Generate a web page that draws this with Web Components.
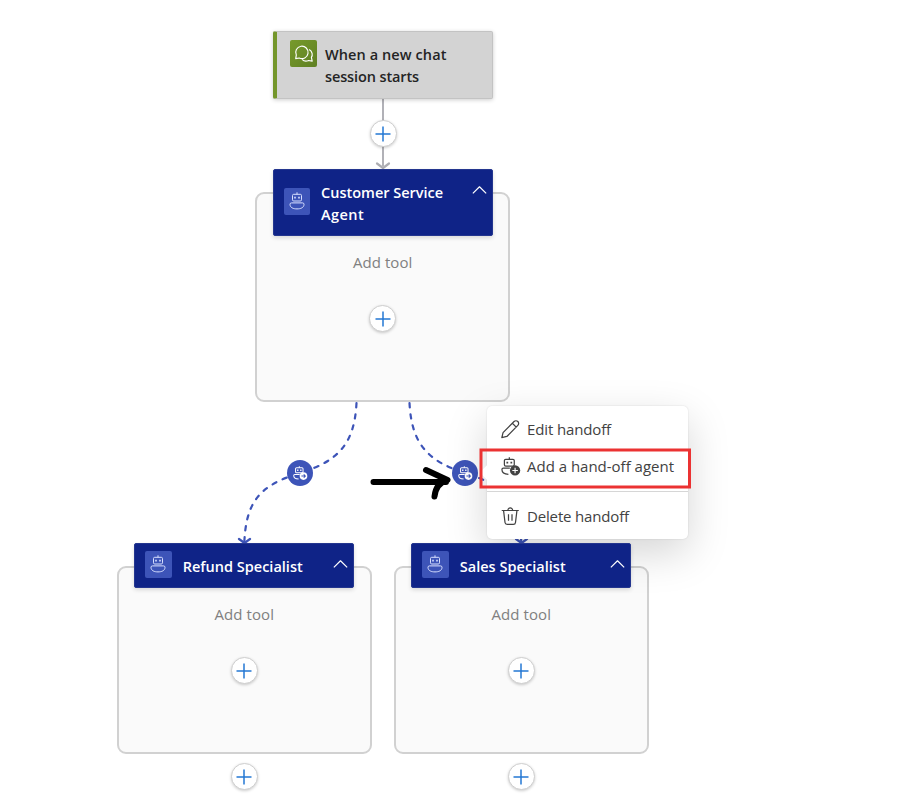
<!DOCTYPE html>
<html lang="en">
<head>
<meta charset="utf-8">
<title>Agent workflow</title>
<style>
html,body{margin:0;background:#fff}
body{width:918px;height:810px;overflow:hidden;font-family:"Open Sans","Noto Sans",sans-serif}
</style>
</head>
<body>
<workflow-canvas></workflow-canvas>
<script>
const define = (name, html, setup) => customElements.define(name, class extends HTMLElement {
  connectedCallback() {
    if (this.shadowRoot) return;
    const t = document.createElement('template');
    t.innerHTML = typeof html === 'function' ? html(this) : html;
    this.attachShadow({mode: 'open'}).append(t.content.cloneNode(true));
    if (setup) setup(this);
  }
});

// Single line of text whose tracking is adjusted to the width attribute.
define('text-run', `<style>:host{display:block;white-space:pre;line-height:22px}span{display:inline-block}</style><span><slot></slot></span>`, el => {
  const s = el.shadowRoot.querySelector('span');
  const n = el.textContent.length;
  const d = (+el.getAttribute('width') - s.getBoundingClientRect().width) / n;
  s.style.letterSpacing = d.toFixed(3) + 'px';
});

const robot = `<rect x="4.500" y="2.300" width="9" height="6.700" rx="1.200"/><path d="M9 .3v2M3.500 10.900h11q1.500 0 1.500 1.400c0 3.500-3.500 4.600-7 4.600s-7-1.100-7-4.600q0-1.400 1.500-1.400z"/><path d="M6.200 5.600h1.600M10.200 5.600h1.600" stroke-width="1.700"/>`;
const badgeRobot = `<rect x="3.300" y="2.200" width="9.600" height="6.600" rx="1.300"/><path d="M8.100 .2v2M8.600 10.800H2.300q-1.400 0-1.400 1.400c0 2.900 2.200 4.500 6.300 4.600"/><path d="M5.300 5.500h1.700M9.200 5.500h1.700" stroke-width="1.800"/>`;
const icons = {
  robot,
  handoff: badgeRobot + `<circle cx="13.500" cy="13" r="4.900" fill="#fff" stroke="none"/><path d="M10.800 13h5M13.800 10.900l2.100 2.100-2.100 2.100" stroke="#3d54b8"/>`,
  addagent: badgeRobot + `<circle cx="13.700" cy="13.100" r="5" fill="#424242" stroke="none"/><path d="M11 13.100h5.400M13.700 10.400v5.400" stroke="#fff" stroke-width="1.100"/>`,
  chat: `<path d="M.7 13.600l.6-3.500a6.200 6.200 0 1 1 2.900 2.900z"/><path d="M14.200 4.600c3.300 2 3.700 5.400 2.200 7.800l.8 3.700-3.600-.6c-2.400 1.100-4.900.6-6.500-1.200"/>`,
  pencil: `<path d="M.8 17.200l1.200-4.900L12.700 1.500a2.450 2.450 0 0 1 3.700 3.700L5.700 16zM11.100 3.200l3.700 3.700"/>`,
  trash: `<path d="M.7 3.400h16.600M6.700 3.200a2.300 2.300 0 0 1 4.600 0M2.500 3.500l1.400 11.600q.2 1.900 2.100 1.900h6q1.900 0 2.100-1.900l1.400-11.600M7.300 7v6.300M10.700 7v6.300"/>`,
  chevron: `<path d="M1 12.500L9 4.500l8 8"/>`,
  plus: `<path d="M1.500 9h15M9 1.500v15"/>`
};
define('ui-icon', el => `<style>:host{display:block;flex:none}svg{display:block;width:100%;height:100%;overflow:visible}</style><svg viewBox="0 0 18 18" fill="none" stroke="currentColor" stroke-width="${el.getAttribute('weight') || 1.1}" stroke-linejoin="round">${icons[el.getAttribute('name')]}</svg>`);

define('add-button', `<style>:host{display:grid;place-items:center;width:27px;height:27px;box-sizing:border-box;border:1px solid #cfcfcf;border-radius:50%;background:#fff;color:#2478d4;box-shadow:0 1px 3px #0003}ui-icon{width:18px;height:18px}</style><ui-icon name="plus" weight="1.5"></ui-icon>`);

define('trigger-card', `<style>
:host{display:flex;box-sizing:border-box;width:220px;height:68.400px;border:1px solid #c3c3c3;border-left:4px solid #74962b;border-radius:2px;background:#d3d3d3;box-shadow:0 1px 4px #0003;padding:8px 0 0 13px;gap:8px;color:#242424;font-size:14.500px;font-weight:600}
.tile{display:grid;place-items:center;width:27px;height:27px;border-radius:2px;background:linear-gradient(135deg,#779a2b,#5f8023);color:#fff}
ui-icon{width:18px;height:18px}.copy{padding-top:4px}
</style><div class="tile"><ui-icon name="chat" weight="1.15"></ui-icon></div><div class="copy"><slot></slot></div>`);

define('agent-group', `<style>
:host{display:grid;width:254.500px;height:var(--h);grid-template-rows:var(--head) 1fr}
.frame{grid-area:1/1/3/2;margin-top:22.500px;border:2px solid #d1d1d1;border-radius:9px;background:#fafafa}
.head{grid-area:1/1;z-index:1;margin:0 17.200px;display:flex;align-items:flex-start;box-sizing:border-box;border:1px solid #24368f;border-radius:2px;background:#0f2387;color:#fff;font-size:14.500px;font-weight:600;padding:var(--pad) 5px 0 10px;box-shadow:0 2px 4px #0002}
.tile{display:grid;place-items:center;width:26.500px;height:27px;box-sizing:border-box;border-radius:2px;background:#3d54b8;color:#d9e0ff}
.tile ui-icon{width:18px;height:18px;margin-top:-2px}
.copy{margin-left:11px;margin-top:var(--shift);flex:1}
.chev{width:15px;height:15px;margin-top:var(--chev)}
.body{grid-area:2/1;z-index:1;display:flex;flex-direction:column;align-items:center;padding-top:15px;gap:32.500px;color:#808080;font-size:15px}
</style><div class="frame"></div><div class="head"><div class="tile"><ui-icon name="robot" weight="1"></ui-icon></div><div class="copy"><slot></slot></div><ui-icon class="chev" name="chevron" weight="1.400"></ui-icon></div><div class="body"><text-run width="59.500">Add tool</text-run><add-button></add-button></div>`);

define('handoff-badge', `<style>:host{display:grid;place-items:center;width:26px;height:26px;border-radius:50%;background:#3d54b8;color:#fff}ui-icon{width:14px;height:14px}</style><ui-icon name="handoff" weight="1.300"></ui-icon>`);

define('menu-item', el => `<style>:host{display:flex;align-items:center;height:36px;gap:8px;padding-left:13.500px;color:#424242;font-size:15px}ui-icon{width:18.500px;height:18.500px}</style><ui-icon name="${el.getAttribute('icon')}" weight="1.200"></ui-icon><slot></slot>`);

define('handoff-menu', `<style>
:host{display:block;box-sizing:border-box;width:201px;height:133px;padding-top:5px;border-radius:5px;background:#fff;box-shadow:0 0 2px #0002,0 14px 42px #0000002b}
:host::before{content:"";position:absolute;left:-5px;top:61px;width:11px;height:11px;background:#fff;transform:rotate(45deg)}
hr{border:0;height:1px;background:#d6d6d6;margin:7px 0 6px}
</style>
<menu-item icon="pencil"><text-run width="84">Edit handoff</text-run></menu-item>
<menu-item icon="addagent" style="margin-top:1px"><text-run width="147">Add a hand-off agent</text-run></menu-item>
<hr><menu-item icon="trash"><text-run width="102">Delete handoff</text-run></menu-item>`);

define('workflow-canvas', `<style>
:host{display:block;position:relative;width:918px;height:810px;background:#fff;overflow:hidden}
:host>*{position:absolute}svg{left:0;top:0}
</style>
<svg width="918" height="810" fill="none">
 <path d="M383 99v67" stroke="#b1b1b7" stroke-width="2"/><path d="M377 163.500l6 4.500 6-4.500" stroke="#adadb2" stroke-width="2.200" stroke-linecap="round" stroke-linejoin="round"/>
 <g stroke="#3d54b8" stroke-width="2.200"><path stroke-dasharray="4.300 6.900" stroke-linecap="round" d="M356.500 403C354.500 443 339 461 300 473S246 500 244.300 543M409.500 403C411.500 443 427 461 465 473S519.500 500 521.300 543"/><path d="M239 539l5.500 4 5.500-4M516 539l5.500 4 5.500-4" stroke-linecap="round" stroke-linejoin="round"/></g>
</svg>
<trigger-card style="left:273px;top:31px"><text-run width="121.500">When a new chat</text-run><text-run width="94">session starts</text-run></trigger-card>
<add-button style="left:369.500px;top:120px"></add-button>
<agent-group style="left:255.400px;top:169.400px;--h:233px;--head:66.500px;--pad:18px;--shift:-6px;--chev:-5px"><text-run width="122">Customer Service</text-run><text-run width="43">Agent</text-run></agent-group>
<agent-group style="left:117px;top:543.400px;--h:211px;--head:44.500px;--pad:7px;--shift:5px;--chev:6px"><text-run width="120">Refund Specialist</text-run></agent-group>
<agent-group style="left:394px;top:543.400px;--h:211px;--head:44.500px;--pad:7px;--shift:5px;--chev:6px"><text-run width="106">Sales Specialist</text-run></agent-group>
<add-button style="left:230.500px;top:763px"></add-button>
<add-button style="left:507.500px;top:763px"></add-button>
<handoff-badge style="left:287px;top:460px"></handoff-badge>
<handoff-badge style="left:452px;top:460px"></handoff-badge>
<handoff-menu style="left:487px;top:406px"></handoff-menu>
<svg width="918" height="810" fill="none">
 <path d="M373.500 482H446M426 470l21.500 10Q436 483 434.500 496.500" stroke="#000" stroke-width="6" stroke-linecap="round" stroke-linejoin="round"/>
 <rect x="481" y="450" width="208.500" height="37" stroke="#eb3232" stroke-width="3"/>
</svg>`);
</script>
</body>
</html>
